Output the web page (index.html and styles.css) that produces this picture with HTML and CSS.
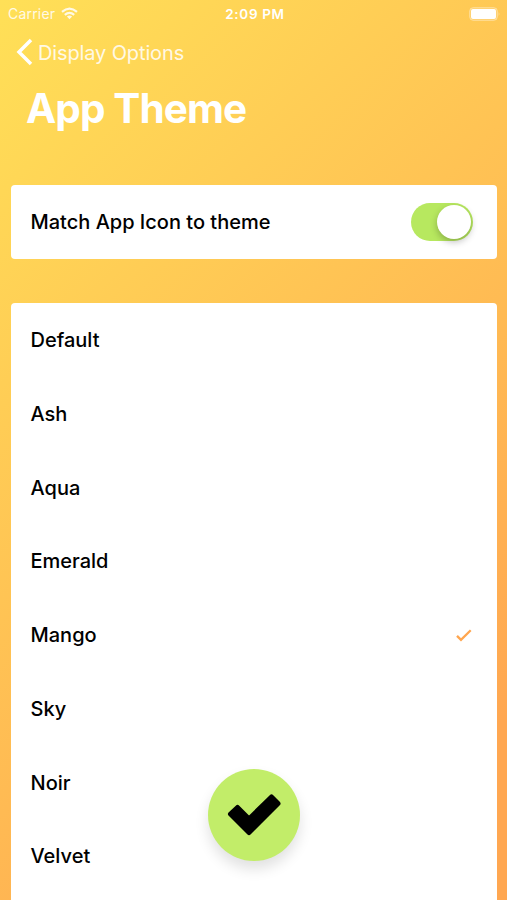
FILE: index.html
```html
<!DOCTYPE html>
<html lang="en">
<head>
<meta charset="utf-8">
<title>App Theme</title>
<link rel="stylesheet" href="styles.css">
</head>
<body>
<div class="screen">
  <div class="status">
    <div class="carrier"><span>Carrier</span>
      <svg class="wifi" width="17" height="13" viewBox="0 0 17 13" fill="none" stroke="#fff" stroke-width="2.200"><path d="M1 4.800Q8.500-1.600 16 4.800M3.800 7.900Q8.500 4 13.200 7.900"/><path d="M5.900 9.600Q8.500 7.600 11.100 9.600L8.500 12.300Z" fill="#fff" stroke="none"/></svg>
    </div>
    <time class="time">2:09 PM</time>
    <svg class="battery" width="32" height="14" viewBox="0 0 32 14"><rect x=".7" y=".7" width="27.600" height="12.600" rx="3.500" fill="#fff" fill-opacity=".12" stroke="#fff" stroke-opacity=".4"/><rect x="2" y="2" width="25" height="10" rx="2" fill="#fff"/><path d="M29.700 5q1.500 1.800 0 4z" fill="#fff" opacity=".5"/></svg>
  </div>
  <nav class="nav">
    <svg width="17" height="28" viewBox="0 0 17 28" fill="none" stroke="#fff" stroke-width="3.500"><path d="M15 2L3 14L15 26"/></svg>
    <span class="back">Display Options</span>
  </nav>
  <h1 class="title">App Theme</h1>
  <section class="card row match"><span>Match App Icon to theme</span><span class="switch"><i class="knob"></i></span></section>
  <section class="card list">
    <div class="row"><span>Default</span></div>
    <div class="row"><span>Ash</span></div>
    <div class="row"><span>Aqua</span></div>
    <div class="row"><span>Emerald</span></div>
    <div class="row"><span>Mango</span><svg class="tick" width="16" height="13" viewBox="0 0 16 13" fill="none" stroke="#ffa64f" stroke-width="2.300"><path d="M1 6.900L5 10.900L14.700 1.300"/></svg></div>
    <div class="row"><span>Sky</span></div>
    <div class="row"><span>Noir</span></div>
    <div class="row"><span>Velvet</span></div>
  </section>
  <button class="confirm" aria-label="Confirm"><svg width="92" height="92" viewBox="0 0 92 92"><path d="M22.500 45L29.500 38.500L41 50L63.500 28L70 34.500L41 63.500Z" stroke="#000" stroke-width="5" stroke-linejoin="round"/></svg></button>
</div>
</body>
</html>
```

FILE: styles.css
```css
* { box-sizing: border-box; }
body { margin: 0; font-family: Inter, "Liberation Sans", sans-serif; }
.screen { position: relative; height: 900px; overflow: hidden; background: linear-gradient(135deg, #ffe057, #ffa751 87%); color: #fff; }
.status { height: 28px; padding: 0 6px 0 8px; display: grid; grid-template-columns: 1fr auto 1fr; align-items: center; font-size: 14px; }
.carrier { display: flex; align-items: center; gap: 6px; margin-top: -2px; opacity: .85; letter-spacing: .2px; }
.time { font-weight: 600; font-size: 13.5px; letter-spacing: .65px; margin-left: 1px; }
.battery { justify-self: end; margin-top: -1px; }
.nav { height: 48px; padding-left: 16px; display: flex; align-items: center; gap: 5px; font-size: 20px; letter-spacing: -.13px; }
.back { opacity: .85; margin-top: 1px; }
.title { margin: 8px 0 0 26px; height: 50px; line-height: 50px; font-size: 40.5px; font-weight: 700; letter-spacing: -.9px; }
.card { margin: 0 10px 0 11px; border-radius: 4px; background: #fff; color: #000; }
.row { height: 73.75px; padding: 1px 24px 0 19.5px; display: flex; align-items: center; justify-content: space-between; font-size: 20px; font-weight: 500; }
.match { margin-top: 51px; }
.list { margin-top: 44px; height: 610px; }
.tick { margin-right: 1px; }
.switch { width: 62px; height: 38px; border-radius: 19px; padding: 2px; background: #b7e85f; display: flex; justify-content: flex-end; }
.knob { width: 34px; height: 34px; border-radius: 50%; background: #fff; box-shadow: 0 3px 7px rgba(0,0,0,.25); }
.confirm { position: absolute; left: 208px; top: 769px; width: 92px; height: 92px; padding: 0; border: 0; border-radius: 50%; background: #c2ed69; box-shadow: 0 8px 14px rgba(0,0,0,.12); }
.confirm svg { display: block; }
```
